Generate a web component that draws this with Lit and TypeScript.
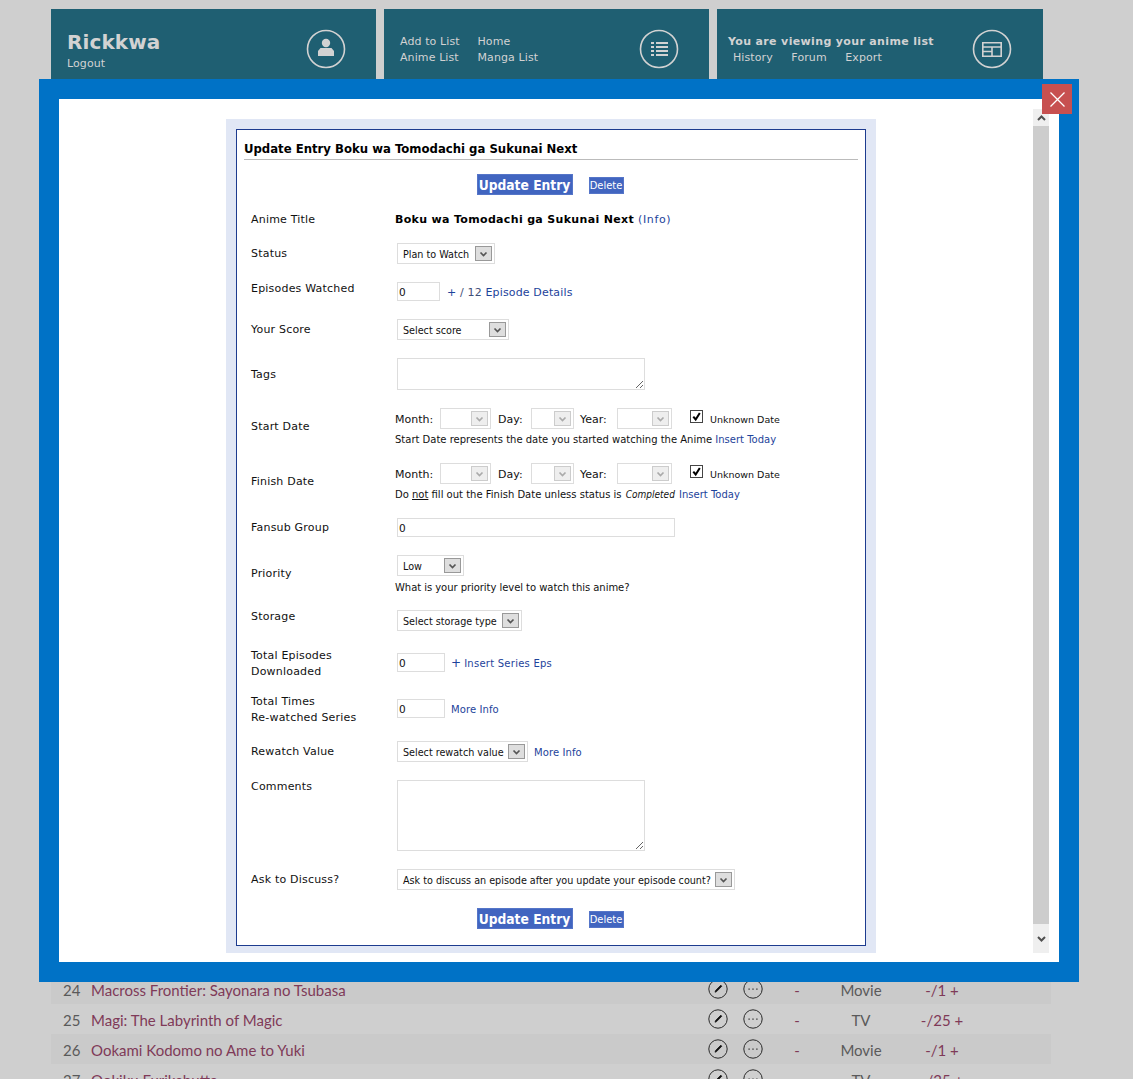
import { LitElement, css, html, svg, TemplateResult } from "lit";
import { customElement } from "lit/decorators.js";

interface FormRow {
  label: TemplateResult | string;
  height: number;
  labelOffset: number;
  field: TemplateResult;
}

const chevron = html`<svg width="9" height="6" viewBox="0 0 9 6"><path d="M1.5 1.5l3 3 3-3" fill="none" stroke="currentColor" stroke-width="1.7"/></svg>`;

function sel(text: string, width: number, disabled = false) {
  return html`<span class="sel ${disabled ? "off" : ""}" style="width:${width}px"><span class="sel-text">${text}</span><span class="sel-arrow">${chevron}</span></span>`;
}

function dateLine() {
  return html`<div class="date">
    <span class="dl dl-month">Month:</span>${sel("", 51, true)}
    <span class="dl dl-day">Day:</span>${sel("", 43, true)}
    <span class="dl dl-year">Year:</span>${sel("", 55, true)}
    <span class="check"><svg width="12" height="12" viewBox="0 0 12 12"><path d="M2.5 5.5l2.6 3.2L9.6 1.6" fill="none" stroke="#000" stroke-width="2.2"/></svg></span>
    <span class="unknown">Unknown Date</span>
  </div>`;
}

const rows: FormRow[] = [
  {
    label: "Status",
    height: 39,
    labelOffset: 2,
    field: sel("Plan to Watch", 98),
  },
  {
    label: "Episodes Watched",
    height: 37,
    labelOffset: -2,
    field: html`<div class="inline"><input class="num" style="width:43px" value="0" /><span class="after"><a>+</a> / 12 <a>Episode Details</a></span></div>`,
  },
  {
    label: "Your Score",
    height: 39,
    labelOffset: 2,
    field: sel("Select score", 112),
  },
  {
    label: "Tags",
    height: 50,
    labelOffset: 8,
    field: html`<textarea class="tags"></textarea>`,
  },
  {
    label: "Start Date",
    height: 55,
    labelOffset: 10,
    field: html`${dateLine()}
      <div class="help">Start Date represents the date you started watching the Anime <a>Insert Today</a></div>`,
  },
  {
    label: "Finish Date",
    height: 55,
    labelOffset: 10,
    field: html`${dateLine()}
      <div class="help">Do <u>not</u> fill out the Finish Date unless status is <i>Completed</i> <a>Insert Today</a></div>`,
  },
  {
    label: "Fansub Group",
    height: 37,
    labelOffset: 1,
    field: html`<input class="num" style="width:278px" value="0" />`,
  },
  {
    label: "Priority",
    height: 55,
    labelOffset: 10,
    field: html`${sel("Low", 67)}
      <div class="help help-low">What is your priority level to watch this anime?</div>`,
  },
  {
    label: "Storage",
    height: 43,
    labelOffset: -2,
    field: sel("Select storage type", 125),
  },
  {
    label: html`Total Episodes<br />Downloaded`,
    height: 46,
    labelOffset: -6,
    field: html`<div class="inline"><input class="num" style="width:48px" value="0" /><span class="small"><a class="plus">+</a><a class="wide">Insert Series Eps</a></span></div>`,
  },
  {
    label: html`Total Times<br />Re-watched Series`,
    height: 42,
    labelOffset: -6,
    field: html`<div class="inline"><input class="num" style="width:48px" value="0" /><span class="small"><a>More Info</a></span></div>`,
  },
  {
    label: "Rewatch Value",
    height: 39,
    labelOffset: 2,
    field: html`<div class="inline">${sel("Select rewatch value", 131)}<span class="small"><a>More Info</a></span></div>`,
  },
  {
    label: "Comments",
    height: 89,
    labelOffset: -2,
    field: html`<textarea class="comments"></textarea>`,
  },
  {
    label: "Ask to Discuss?",
    height: 39,
    labelOffset: 2,
    field: sel("Ask to discuss an episode after you update your episode count?", 338),
  },
];

const listRows = [
  { n: 24, title: "Macross Frontier: Sayonara no Tsubasa", type: "Movie", eps: "-/1" },
  { n: 25, title: "Magi: The Labyrinth of Magic", type: "TV", eps: "-/25" },
  { n: 26, title: "Ookami Kodomo no Ame to Yuki", type: "Movie", eps: "-/1" },
  { n: 27, title: "Ookiku Furikabutte", type: "TV", eps: "-/25" },
];

const ring = svg`<circle cx="20" cy="20" r="18.5" fill="none" stroke="#d2d2d2" stroke-width="1.6"/>`;

const userIcon = html`<svg class="ring" width="40" height="40" viewBox="0 0 40 40">${ring}
  <circle cx="20" cy="14" r="4.2" fill="#d2d2d2"/><path d="M14.5 19h11l2.5 3v5H12v-5z" fill="#d2d2d2"/></svg>`;

const listIcon = html`<svg class="ring" width="40" height="40" viewBox="0 0 40 40">${ring}
  <path d="M12 14h3M17 14h12M12 18h3M17 18h12M12 22h3M17 22h12M12 26h3M17 26h12" stroke="#d2d2d2" stroke-width="2"/></svg>`;

const tableIcon = html`<svg class="ring" width="40" height="40" viewBox="0 0 40 40">${ring}
  <path d="M10.8 13.8h18.4v13.4H10.8z" fill="none" stroke="#d2d2d2" stroke-width="1.6"/><path d="M10.8 18h18.4M20 18v9M11 22.5h9" stroke="#d2d2d2" stroke-width="1.6"/></svg>`;

const editIcon = html`<svg width="20" height="20" viewBox="0 0 20 20"><circle cx="10" cy="10" r="9.2" fill="none" stroke="#2a2a2a" stroke-width="1"/>
  <path d="M12.8 6.2l1 1-5.2 5.4-1.6.6.6-1.7z" fill="#111" stroke="#111" stroke-width=".8"/></svg>`;

const moreIcon = html`<svg width="20" height="20" viewBox="0 0 20 20"><circle cx="10" cy="10" r="9.2" fill="none" stroke="#2a2a2a" stroke-width="1"/>
  <path d="M5.5 9.5h1.2v1.2H5.5zM9.4 9.5h1.2v1.2H9.4zM13.3 9.5h1.2v1.2h-1.2z" fill="#222"/></svg>`;

@customElement("app-root")
export class AppRoot extends LitElement {
  static styles = css`
    :host {
      display: block;
      position: relative;
      height: 1079px;
      overflow: hidden;
      background: #cfcfcf;
      font-family: "DejaVu Sans", Verdana, sans-serif;
    }
    a {
      color: #1d439b;
      text-decoration: none;
    }

    /* page behind the overlay */
    .top {
      display: flex;
      gap: 8px;
      padding: 9px 0 0 51px;
    }
    .card {
      position: relative;
      box-sizing: border-box;
      width: 325px;
      height: 80px;
      padding: 25px 0 0 16px;
      background: #1f5f72;
      color: #d2d2d2;
      font-size: 11px;
      line-height: 16px;
      letter-spacing: 0.1px;
    }
    .card:last-child {
      width: 326px;
      padding-left: 11px;
    }
    .card .ring {
      position: absolute;
      top: 20px;
      right: 30px;
    }
    .card:last-child .ring {
      right: 31px;
    }
    .name {
      font-size: 20px;
      font-weight: bold;
      line-height: 16px;
      letter-spacing: 0.1px;
    }
    .logout {
      margin-top: 6px;
    }
    .links {
      display: grid;
      grid-template-columns: 77.5px auto;
    }
    .viewing {
      font-weight: bold;
      letter-spacing: 0.35px;
    }
    .sub {
      display: flex;
      gap: 18.5px;
      padding-left: 5px;
    }
    .list {
      margin: 885px 0 0 51px;
      width: 1000px;
      font-family: Lato, "Open Sans", sans-serif;
      font-size: 15px;
      color: #5a5a5a;
    }
    .item {
      display: grid;
      grid-template-columns: 28px 616px 35px 35px 40px 88px 74px;
      align-items: center;
      height: 30px;
      padding-left: 12px;
    }
    .item:nth-child(odd) {
      background: #cacaca;
    }
    .item span {
      padding-top: 1px;
    }
    .item .title,
    .item .eps {
      color: #7f3a58;
    }
    .item .center,
    .item .eps {
      text-align: center;
    }
    .item .icon {
      padding: 0 0 0 1px;
    }
    .item svg {
      display: block;
      margin-top: -1px;
    }

    /* overlay */
    .modal {
      position: absolute;
      top: 79px;
      left: 39px;
      box-sizing: border-box;
      width: 1040px;
      height: 903px;
      padding: 20px;
      background: #0072c6;
    }
    .close {
      position: absolute;
      top: 5px;
      right: 7px;
      display: flex;
      align-items: center;
      justify-content: center;
      width: 30px;
      height: 30px;
      background: #c75050;
    }
    .frame {
      display: flex;
      height: 100%;
      background: #fff;
    }
    .content {
      flex: 1;
      overflow: hidden;
      padding: 20px 0 0 167px;
    }
    .scrollbar {
      display: flex;
      flex-direction: column;
      width: 16px;
      margin: 10px 10px 9px 0;
      background: #efefef;
      color: #505050;
    }
    .sb-btn {
      display: flex;
      align-items: center;
      justify-content: center;
      height: 17px;
    }
    .sb-thumb {
      flex: 1;
      background: #cdcdcd;
    }
    .sb-down {
      height: 29px;
    }

    .panel {
      box-sizing: border-box;
      width: 650px;
      height: 834px;
      padding: 10px 10px 7px;
      background: #e1e7f5;
    }
    .box {
      box-sizing: border-box;
      height: 817px;
      padding: 0 7px;
      border: 1px solid #1d3b8f;
      background: #fff;
      color: #111;
      font-size: 11px;
      line-height: 16px;
    }
    h2 {
      margin: 0;
      padding: 11px 0 2px;
      border-bottom: 1px solid #bbb;
      font-size: 11.7px;
      line-height: 16px;
      color: #000;
    }
    .buttons {
      display: flex;
      justify-content: center;
      align-items: center;
      gap: 16px;
      margin-top: 14px;
      padding-right: 2px;
    }
    .buttons.bottom {
      margin-top: 0;
    }
    .btn {
      box-sizing: border-box;
      width: 96px;
      height: 21px;
      border: 1px solid #5575c8;
      background: #4165c0;
      color: #fff;
      font-family: "DejaVu Sans Condensed", "DejaVu Sans", sans-serif;
      font-size: 13.7px;
      font-weight: bold;
      line-height: 20px;
      text-align: center;
      white-space: nowrap;
    }
    .btn.del {
      width: 35px;
      height: 17px;
      margin-top: 2px;
      font-size: 11px;
      font-weight: normal;
      line-height: 16px;
    }
    .rows {
      margin-top: 16px;
    }
    .row {
      display: flex;
      align-items: flex-start;
      padding-left: 7px;
    }
    .label {
      flex: none;
      width: 146px;
      padding-top: 1px;
      letter-spacing: 0.2px;
    }
    .title-row {
      display: flex;
      height: 32px;
      padding-left: 7px;
    }
    .title-row .val {
      margin-left: -2px;
      padding-top: 1px;
      letter-spacing: 0.6px;
    }
    .title-row b {
      color: #000;
      letter-spacing: 0.33px;
    }
    .sel {
      position: relative;
      display: inline-flex;
      align-items: center;
      box-sizing: border-box;
      height: 21px;
      border: 1px solid #ddd;
      background: #fff;
      vertical-align: top;
    }
    .sel-text {
      padding: 2px 0 0 5px;
      font-family: "DejaVu Sans Condensed", "DejaVu Sans", sans-serif;
      font-size: 10.7px;
      white-space: nowrap;
      color: #111;
    }
    .sel-arrow {
      position: absolute;
      top: 2px;
      right: 2px;
      display: flex;
      align-items: center;
      justify-content: center;
      box-sizing: border-box;
      width: 17px;
      height: 15px;
      border: 1px solid #999;
      background: #dedede;
      color: #555;
    }
    .sel.off .sel-arrow {
      border-color: #ccc;
      background: #eee;
      color: #aaa;
    }
    .inline {
      display: flex;
      align-items: center;
    }
    input.num {
      display: block;
      box-sizing: border-box;
      height: 19px;
      margin: 0;
      padding: 0 1px;
      border: 1px solid #ddd;
      outline: none;
      font: 10.5px "DejaVu Sans", sans-serif;
      color: #111;
    }
    textarea {
      display: block;
      box-sizing: border-box;
      width: 248px;
      margin: 0;
      border: 1px solid #ddd;
      outline: none;
    }
    .tags {
      height: 32px;
    }
    .comments {
      height: 71px;
    }
    .after {
      margin-left: 7px;
      padding-top: 3px;
      color: #3f4f78;
      letter-spacing: 0.15px;
    }
    .small {
      margin-left: 6px;
      padding-top: 2px;
      font-size: 10px;
      letter-spacing: 0.1px;
    }
    .small .plus {
      margin-right: 3px;
      font-size: 12px;
    }
    .small .wide {
      letter-spacing: 0.25px;
    }
    .date {
      display: flex;
      align-items: center;
      height: 21px;
      margin-left: -2px;
    }
    .dl {
      flex: none;
      padding-top: 3px;
    }
    .dl-month {
      width: 45px;
    }
    .dl-day {
      width: 33px;
      margin-left: 7px;
    }
    .dl-year {
      width: 37px;
      margin-left: 6px;
    }
    .check {
      display: flex;
      box-sizing: border-box;
      width: 13px;
      height: 13px;
      margin: -4px 0 0 18px;
      border: 1px solid #444;
      background: #fff;
    }
    .unknown {
      margin-left: 7px;
      padding-top: 3px;
      font-size: 9.5px;
    }
    .help {
      margin: 4px 0 0 -2px;
      font-size: 10px;
      line-height: 14px;
      white-space: nowrap;
    }
    .help-low {
      margin-top: 5px;
      letter-spacing: -0.05px;
    }
    .help i {
      margin: 0 1px;
      font-family: "DejaVu Sans Condensed", "DejaVu Sans", sans-serif;
    }
  `;

  private renderButtons(extra = "") {
    return html`<div class="buttons ${extra}"><span class="btn">Update Entry</span><span class="btn del">Delete</span></div>`;
  }

  private renderForm() {
    return html`<div class="panel">
      <div class="box">
        <h2>Update Entry Boku wa Tomodachi ga Sukunai Next</h2>
        ${this.renderButtons()}
        <div class="rows">
          <div class="title-row">
            <span class="label">Anime Title</span>
            <span class="val"><b>Boku wa Tomodachi ga Sukunai Next</b> <a>(Info)</a></span>
          </div>
          ${rows.map(
            (r) => html`<div class="row" style="height:${r.height}px">
              <div class="label" style="margin-top:${r.labelOffset}px">${r.label}</div>
              <div class="val">${r.field}</div>
            </div>`,
          )}
        </div>
        ${this.renderButtons("bottom")}
      </div>
    </div>`;
  }

  render() {
    return html`
      <div class="top">
        <div class="card">
          <div class="name">Rickkwa</div>
          <div class="logout">Logout</div>
          ${userIcon}
        </div>
        <div class="card">
          <div class="links">
            <span>Add to List</span><span>Home</span>
            <span>Anime List</span><span>Manga List</span>
          </div>
          ${listIcon}
        </div>
        <div class="card">
          <div class="viewing">You are viewing your anime list</div>
          <div class="sub"><span>History</span><span>Forum</span><span>Export</span></div>
          ${tableIcon}
        </div>
      </div>

      <div class="list">
        ${listRows.map(
          (r) => html`<div class="item">
            <span>${r.n}</span>
            <span class="title">${r.title}</span>
            <span class="icon">${editIcon}</span>
            <span class="icon">${moreIcon}</span>
            <span class="center title">-</span>
            <span class="center">${r.type}</span>
            <span class="eps">${r.eps} +</span>
          </div>`,
        )}
      </div>

      <div class="modal">
        <div class="frame">
          <div class="content">${this.renderForm()}</div>
          <div class="scrollbar">
            <div class="sb-btn"><svg width="9" height="6" viewBox="0 0 9 6"><path d="M1 5l3.5-3.5L8 5" fill="none" stroke="currentColor" stroke-width="2"/></svg></div>
            <div class="sb-thumb"></div>
            <div class="sb-btn sb-down"><svg width="9" height="6" viewBox="0 0 9 6"><path d="M1 1l3.5 3.5L8 1" fill="none" stroke="currentColor" stroke-width="2"/></svg></div>
          </div>
        </div>
        <div class="close"><svg width="15" height="15" viewBox="0 0 15 15"><path d="M.5.5l14 14M14.5.5l-14 14" stroke="#fff" stroke-width="1.3"/></svg></div>
      </div>
    `;
  }
}
